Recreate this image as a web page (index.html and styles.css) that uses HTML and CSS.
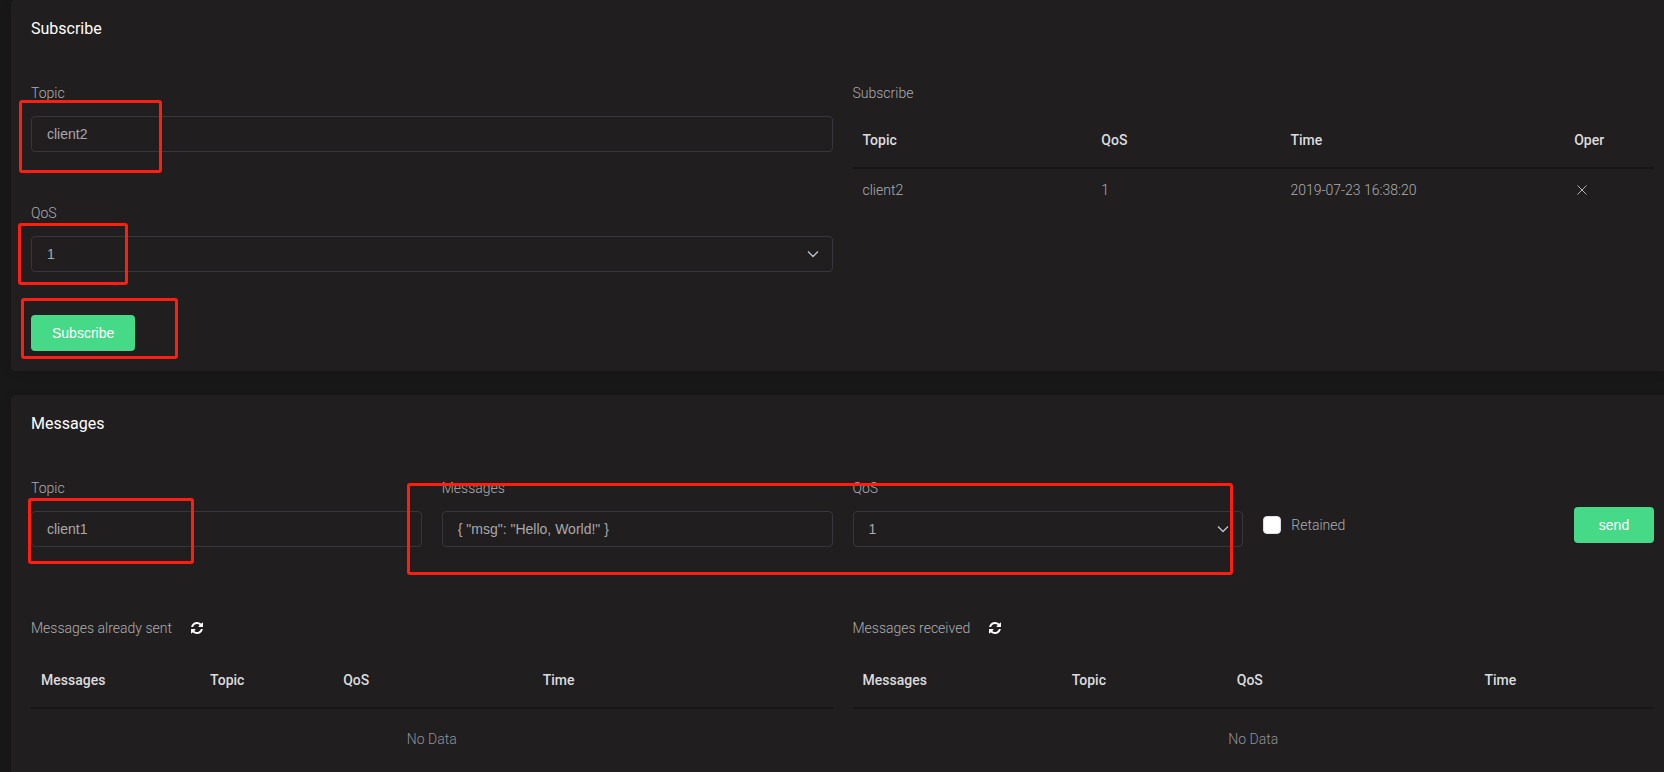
FILE: index.html
```html
<!DOCTYPE html>
<html lang="en">

<head>
    <meta charset="utf-8">
    <title>Websocket</title>
    <link rel="stylesheet" href="styles.css">
</head>

<body>
    <section class="card">
        <h2 class="card-title">Subscribe</h2>
        <div class="row halves">
            <form class="sub-form">
                <div class="field">
                    <label for="sub-topic">Topic</label>
                    <input class="control" id="sub-topic" type="text" value="client2">
                </div>
                <div class="field">
                    <label for="sub-qos">QoS</label>
                    <div class="select">
                        <select class="control" id="sub-qos">
                            <option>0</option>
                            <option selected>1</option>
                            <option>2</option>
                        </select>
                        <svg class="arrow" viewBox="0 0 12 8"><path d="M1 1.5l5 5 5-5"/></svg>
                    </div>
                </div>
                <button class="btn" type="button">Subscribe</button>
            </form>
            <div>
                <h3 class="table-title">Subscribe</h3>
                <table class="table subs">
                    <thead>
                        <tr>
                            <th>Topic</th>
                            <th>QoS</th>
                            <th>Time</th>
                            <th>Oper</th>
                        </tr>
                    </thead>
                    <tbody>
                        <tr>
                            <td>client2</td>
                            <td>1</td>
                            <td>2019-07-23 16:38:20</td>
                            <td>
                                <button class="icon-btn" type="button" aria-label="Unsubscribe">
                                    <svg class="close" viewBox="0 0 16 16"><path d="M3.5 3.5l9 9M12.5 3.5l-9 9"/></svg>
                                </button>
                            </td>
                        </tr>
                    </tbody>
                </table>
            </div>
        </div>
        <div class="mark mark-sub-topic"></div>
        <div class="mark mark-sub-qos"></div>
        <div class="mark mark-sub-button"></div>
    </section>

    <section class="card last">
        <h2 class="card-title">Messages</h2>
        <form class="row quarters">
            <div class="field">
                <label for="msg-topic">Topic</label>
                <input class="control" id="msg-topic" type="text" value="client1">
            </div>
            <div class="field">
                <label for="msg-body">Messages</label>
                <input class="control" id="msg-body" type="text" value='{ "msg": "Hello, World!" }'>
            </div>
            <div class="field">
                <label for="msg-qos">QoS</label>
                <div class="select">
                    <select class="control" id="msg-qos">
                        <option>0</option>
                        <option selected>1</option>
                        <option>2</option>
                    </select>
                    <svg class="arrow" viewBox="0 0 12 8"><path d="M1 1.5l5 5 5-5"/></svg>
                </div>
            </div>
            <div class="send">
                <label class="check"><input type="checkbox">Retained</label>
                <button class="btn" type="button">send</button>
            </div>
        </form>

        <div class="row halves logs">
            <div>
                <div class="log-head">
                    <h3>Messages already sent</h3>
                    <button class="icon-btn" type="button" aria-label="Refresh sent">
                        <svg class="refresh" viewBox="0 0 1536 1536"><path d="M1511 928q0 5-1 7-64 268-268 434.500t-478 166.500q-146 0-282.500-55t-243.500-157l-129 129q-19 19-45 19t-45-19-19-45v-448q0-26 19-45t45-19h448q26 0 45 19t19 45-19 45l-137 137q71 66 161 102t187 36q134 0 250-65t186-179q11-17 53-117 8-23 30-23h192q13 0 22.500 9.500t9.500 22.500zm25-800v448q0 26-19 45t-45 19h-448q-26 0-45-19t-19-45 19-45l138-138q-148-137-349-137-134 0-250 65t-186 179q-11 17-53 117-8 23-30 23h-199q-13 0-22.500-9.500t-9.500-22.500v-7q65-268 270-434.500t480-166.500q146 0 284 55.500t245 156.500l130-129q19-19 45-19t45 19 19 45z"/></svg>
                    </button>
                </div>
                <table class="table sent">
                    <thead>
                        <tr>
                            <th>Messages</th>
                            <th>Topic</th>
                            <th>QoS</th>
                            <th>Time</th>
                        </tr>
                    </thead>
                    <tbody>
                        <tr>
                            <td class="empty" colspan="4">No Data</td>
                        </tr>
                    </tbody>
                </table>
            </div>
            <div>
                <div class="log-head">
                    <h3>Messages received</h3>
                    <button class="icon-btn" type="button" aria-label="Refresh received">
                        <svg class="refresh" viewBox="0 0 1536 1536"><path d="M1511 928q0 5-1 7-64 268-268 434.500t-478 166.500q-146 0-282.500-55t-243.500-157l-129 129q-19 19-45 19t-45-19-19-45v-448q0-26 19-45t45-19h448q26 0 45 19t19 45-19 45l-137 137q71 66 161 102t187 36q134 0 250-65t186-179q11-17 53-117 8-23 30-23h192q13 0 22.500 9.500t9.500 22.500zm25-800v448q0 26-19 45t-45 19h-448q-26 0-45-19t-19-45 19-45l138-138q-148-137-349-137-134 0-250 65t-186 179q-11 17-53 117-8 23-30 23h-199q-13 0-22.500-9.500t-9.500-22.500v-7q65-268 270-434.500t480-166.500q146 0 284 55.500t245 156.500l130-129q19-19 45-19t45 19 19 45z"/></svg>
                    </button>
                </div>
                <table class="table received">
                    <thead>
                        <tr>
                            <th>Messages</th>
                            <th>Topic</th>
                            <th>QoS</th>
                            <th>Time</th>
                        </tr>
                    </thead>
                    <tbody>
                        <tr>
                            <td class="empty" colspan="4">No Data</td>
                        </tr>
                    </tbody>
                </table>
            </div>
        </div>
        <div class="mark mark-msg-topic"></div>
        <div class="mark mark-msg-body"></div>
    </section>
</body>

</html>
```

FILE: styles.css
```css
* {
    box-sizing: border-box;
}

body {
    margin: 0;
    padding-left: 11px;
    min-height: 100vh;
    display: flex;
    flex-direction: column;
    gap: 24px;
    background-color: #181818;
    color: #aeaeb0;
    font-family: Roboto, "Liberation Sans", sans-serif;
    font-size: 14px;
    font-weight: 300;
    line-height: 24px;
}

h2,
h3 {
    margin: 0;
    font-size: 14px;
    font-weight: 300;
}

/* the cards run off the right side of the window */
.card {
    position: relative;
    padding: 17px 10px 20px 20px;
    background-color: #201e1f;
    border-radius: 4px 0 0 4px;
    box-shadow: 0 2px 12px rgba(0, 0, 0, .1);
}

.card.last {
    flex-grow: 1;
    border-radius: 4px 0 0 0;
}

.card-title {
    margin-bottom: 40px;
    color: #fff;
    font-size: 16px;
    font-weight: 400;
}

.row {
    display: grid;
    column-gap: 20px;
}

.halves {
    grid-template-columns: repeat(2, minmax(0, 1fr));
}

.quarters {
    grid-template-columns: repeat(4, minmax(0, 1fr));
}

/* form */
.field label {
    display: block;
    margin-bottom: 11px;
}

.sub-form .field {
    margin-bottom: 49px;
}

.sub-form .field:nth-child(2) {
    margin-bottom: 43px;
}

.control {
    display: block;
    width: 100%;
    height: 36px;
    padding: 0 15px;
    border: 1px solid #37363b;
    border-radius: 4px;
    background: transparent;
    color: #a9a9ab;
    font: 14px "Liberation Sans", Arial, sans-serif;
    appearance: none;
}

.select {
    position: relative;
}

.arrow {
    position: absolute;
    top: 14px;
    right: 14px;
    width: 12px;
    height: 8px;
    fill: none;
    stroke: #c0c4cc;
    stroke-width: 1.3;
    pointer-events: none;
}

.btn {
    display: block;
    min-width: 80px;
    height: 36px;
    padding: 0 21px;
    border: 0;
    border-radius: 4px;
    background-color: #45d988;
    color: #fff;
    font: 14px "Liberation Sans", Arial, sans-serif;
}

.send {
    display: flex;
    justify-content: space-between;
    align-items: center;
    height: 36px;
    margin-top: 31px;
}

.check {
    display: flex;
    align-items: center;
    gap: 10px;
}

.check input {
    width: 18px;
    height: 18px;
    margin: 0;
    border: 1px solid #dcdfe6;
    border-radius: 4px;
    background-color: #fff;
    appearance: none;
}

/* tables */
.table-title {
    margin-bottom: 6px;
}

.table {
    width: 100%;
    table-layout: fixed;
    border-collapse: separate;
    border-spacing: 0;
    text-align: left;
}

.table th {
    height: 58px;
    padding: 2px 10px 0;
    border-bottom: 2px solid #171717;
    color: #dcdcde;
    font-weight: 500;
}

.table td {
    height: 42px;
    padding: 0 10px;
}

.table .empty {
    height: 58px;
    padding-top: 2px;
    color: #909399;
    text-align: center;
}

.subs th:nth-child(1) { width: 29.8%; }
.subs th:nth-child(2) { width: 23.6%; }
.subs th:nth-child(3) { width: 35.4%; }

.sent th:nth-child(1) { width: 21.1%; }
.sent th:nth-child(2) { width: 16.6%; }
.sent th:nth-child(3) { width: 24.9%; }

.received th:nth-child(1) { width: 26.1%; }
.received th:nth-child(2) { width: 20.6%; }
.received th:nth-child(3) { width: 30.9%; }

.logs {
    margin-top: 64px;
}

.log-head {
    display: flex;
    align-items: center;
    gap: 19px;
    height: 34px;
    margin-bottom: 6px;
}

.icon-btn {
    display: flex;
    padding: 0;
    border: 0;
    background: none;
}

.close {
    width: 16px;
    height: 16px;
    stroke: #b4b4b6;
}

.refresh {
    width: 12px;
    height: 12px;
    fill: #fff;
}

/* red frames that point out what to fill in */
.mark {
    position: absolute;
    border: 3px solid #ff1e0f;
    border-radius: 3px;
    pointer-events: none;
}

.mark-sub-topic {
    top: 100px;
    left: 8px;
    width: 143px;
    height: 73px;
}

.mark-sub-qos {
    top: 223px;
    left: 7px;
    width: 110px;
    height: 62px;
}

.mark-sub-button {
    top: 298px;
    left: 10px;
    width: 157px;
    height: 61px;
}

.mark-msg-topic {
    top: 103px;
    left: 17px;
    width: 166px;
    height: 66px;
}

.mark-msg-body {
    top: 88px;
    left: 396px;
    width: 826px;
    height: 92px;
}
```
